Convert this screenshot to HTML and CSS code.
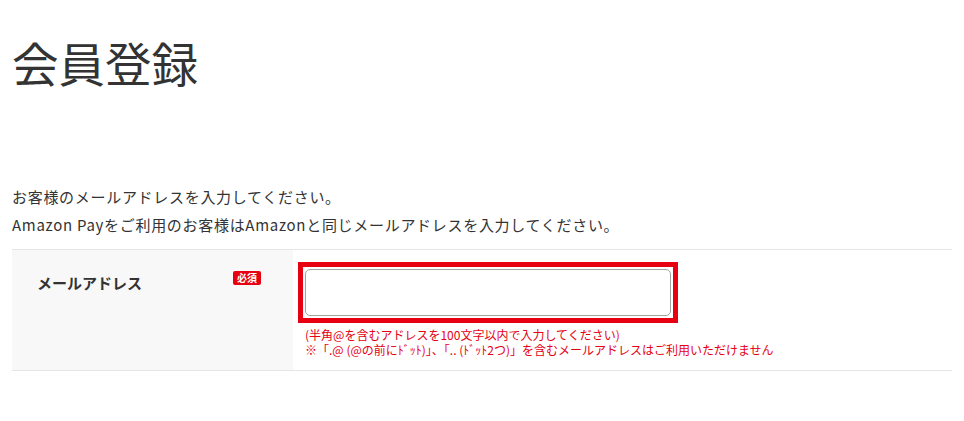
FILE: index.html
```html
<!DOCTYPE html>
<html lang="ja">
<head>
    <meta charset="UTF-8">
    <meta name="viewport" content="width=device-width, initial-scale=1.0">
    <title>会員登録</title>
    <link rel="stylesheet" href="styles.css">
</head>
<body>
    <div class="container">
        <h1 class="page-title">会員登録</h1>

        <div class="intro">
            <p>お客様のメールアドレスを入力してください。</p>
            <p>Amazon Payをご利用のお客様はAmazonと同じメールアドレスを入力してください。</p>
        </div>

        <div class="form-table">
            <div class="form-row">
                <div class="form-label">
                    <span class="label-text">メールアドレス</span>
                    <span class="required">必須</span>
                </div>
                <div class="form-field">
                    <div class="highlight">
                        <input type="email" class="text-input" id="email">
                    </div>
                    <div class="notes">
                        <p>(半角@を含むアドレスを100文字以内で入力してください)</p>
                        <p>※「.@ (@の前にﾄﾞｯﾄ)」、「.. (ﾄﾞｯﾄ2つ)」を含むメールアドレスはご利用いただけません</p>
                    </div>
                </div>
            </div>
        </div>
    </div>
</body>
</html>
```

FILE: styles.css
```css
body {
    margin: 0;
    font-family: "Noto Sans CJK JP", "Noto Sans", sans-serif;
    color: #333;
    background: #fff;
}
.container {
    padding: 0 12px;
}
p {
    margin: 0;
}
.page-title {
    margin: 30px 0 0 0;
    font-size: 46.5px;
    font-weight: 400;
    line-height: 64px;
}
.intro {
    margin-top: 89px;
    font-size: 15px;
    line-height: 28px;
    letter-spacing: 0.7px;
}
.form-table {
    margin-top: 10px;
    border-top: 1px solid #e6e6e6;
    border-bottom: 1px solid #e6e6e6;
}
.form-row {
    display: grid;
    grid-template-columns: 281px 1fr;
    min-height: 120px;
}
.form-label {
    display: flex;
    justify-content: space-between;
    align-items: flex-start;
    background: #f8f8f8;
    padding: 23px 32px 0 25px;
}
.label-text {
    font-size: 15px;
    font-weight: 700;
    line-height: 20px;
}
.required {
    margin-top: -2px;
    background: #e60012;
    color: #fff;
    font-size: 10px;
    font-weight: 700;
    line-height: 14px;
    padding: 0 4px;
    border-radius: 2px;
}
.form-field {
    padding: 12px 0 13px 5px;
}
.highlight {
    display: inline-block;
    border: 5px solid #e60012;
    padding: 2px;
    line-height: 0;
}
.text-input {
    box-sizing: border-box;
    width: 366px;
    height: 47px;
    margin: 0;
    border: 1px solid #a3a3a3;
    border-radius: 5px;
    background: #fff;
    padding: 0 10px;
    font-size: 15px;
    font-family: inherit;
}
.notes {
    margin: 5px 0 0 7px;
    color: #e60012;
    font-size: 12px;
    line-height: 14.5px;
}
```
